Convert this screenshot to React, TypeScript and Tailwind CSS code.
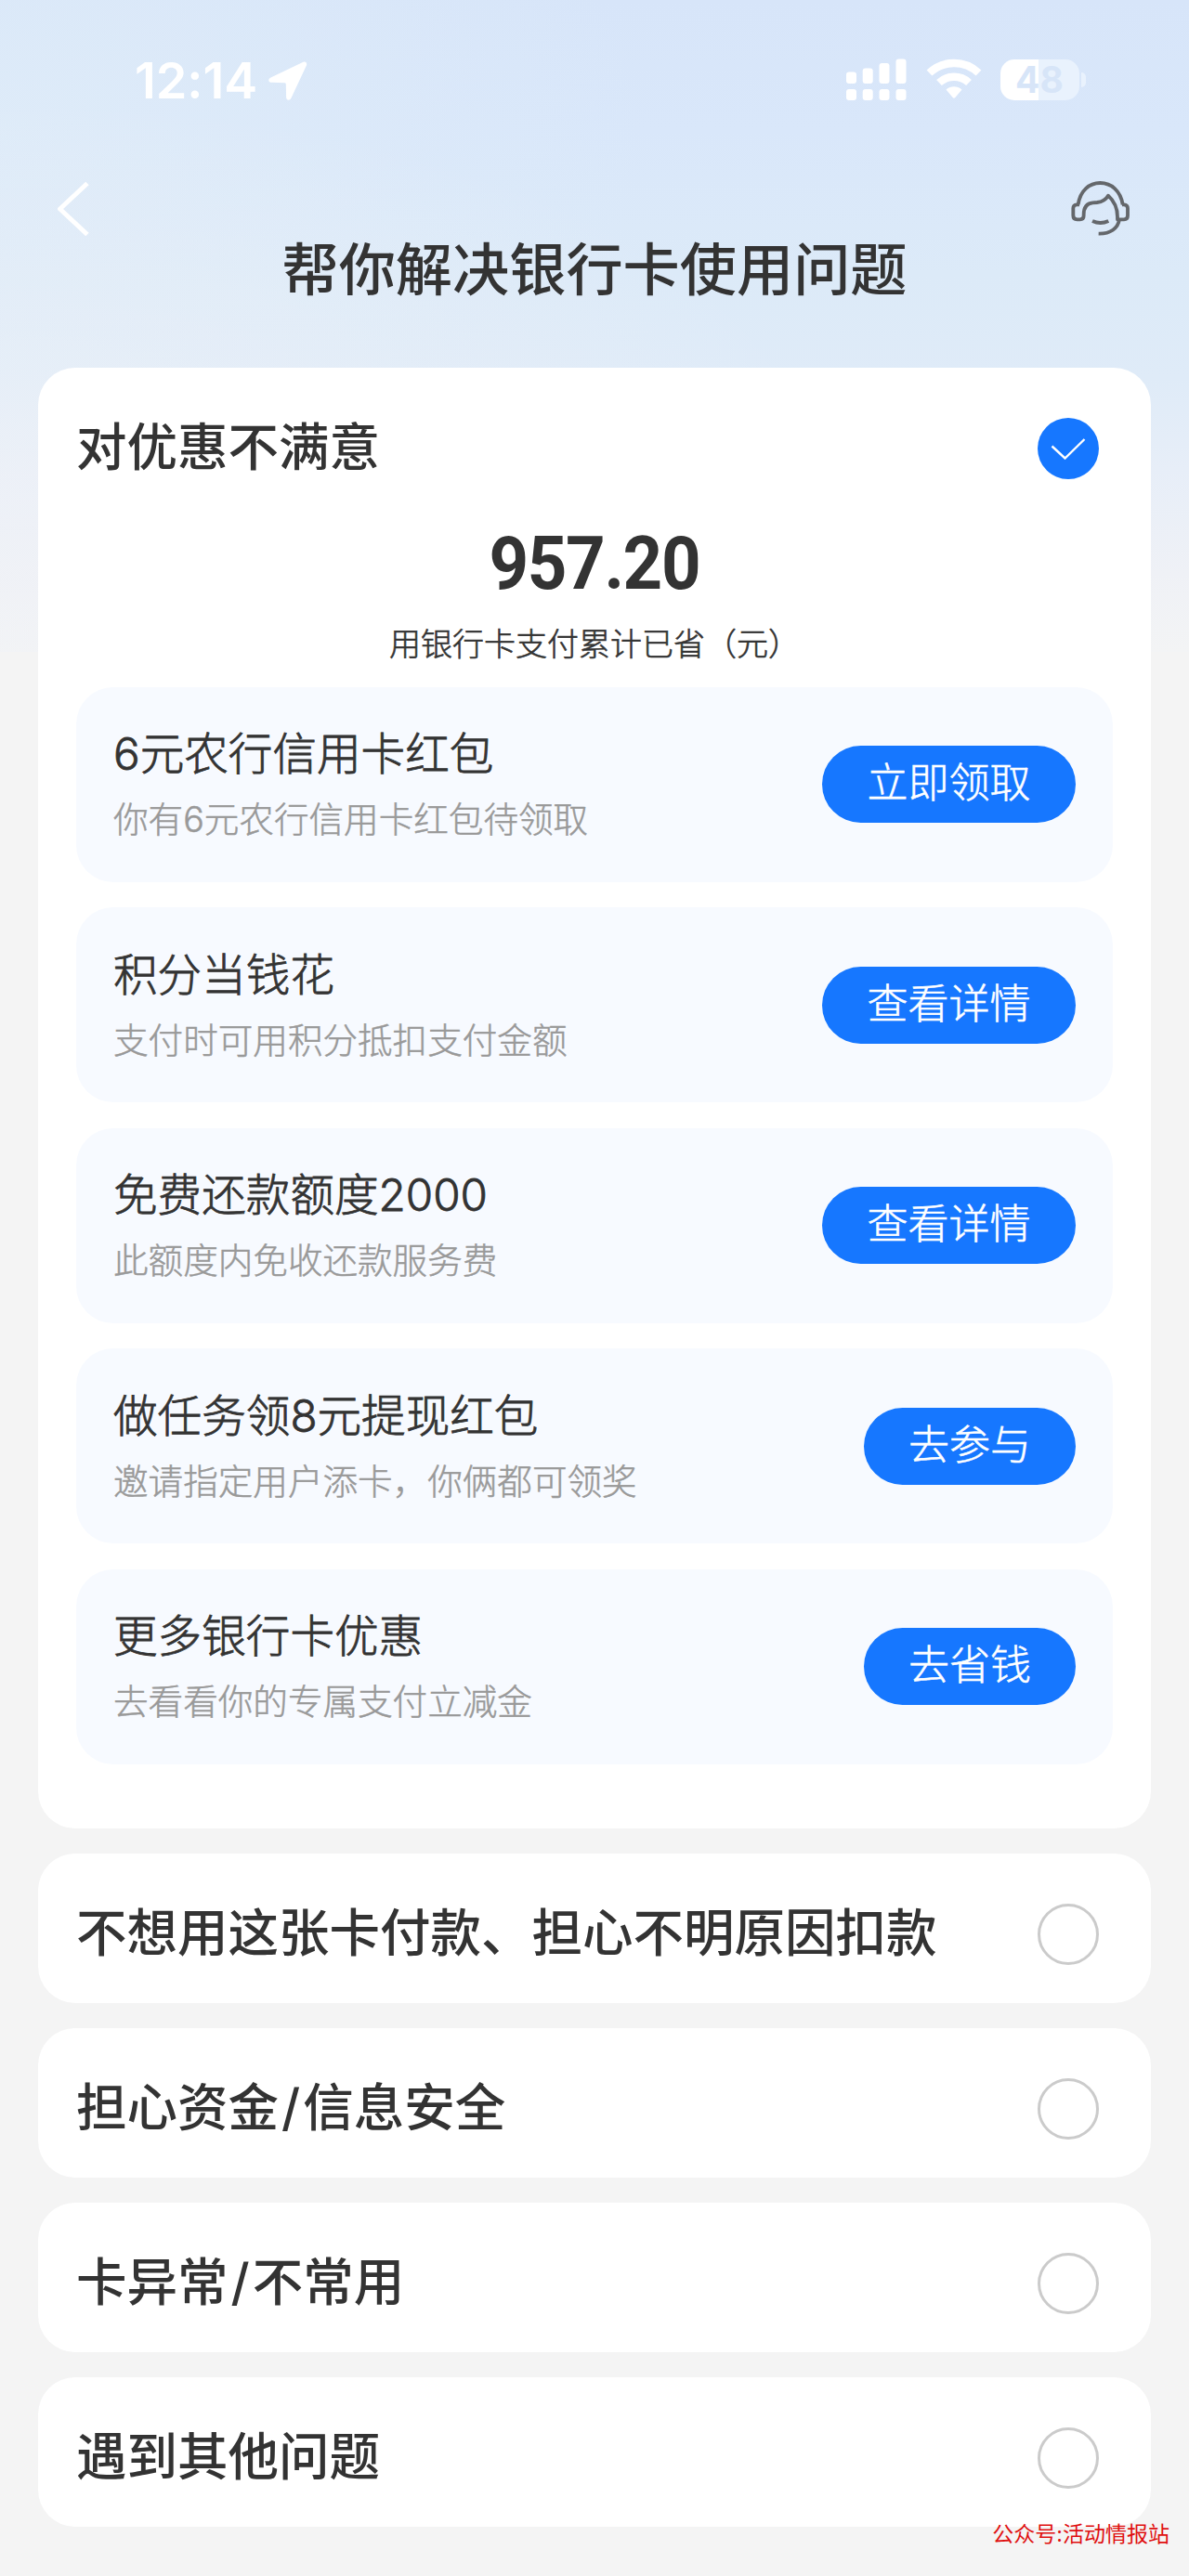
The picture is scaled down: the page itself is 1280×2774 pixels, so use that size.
import React from "react";

type Offer = { title: string; note: string; action: string; small?: boolean };

const offers: Offer[] = [
  { title: "6元农行信用卡红包", note: "你有6元农行信用卡红包待领取", action: "立即领取" },
  { title: "积分当钱花", note: "支付时可用积分抵扣支付金额", action: "查看详情" },
  { title: "免费还款额度2000", note: "此额度内免收还款服务费", action: "查看详情" },
  { title: "做任务领8元提现红包", note: "邀请指定用户添卡，你俩都可领奖", action: "去参与", small: true },
  { title: "更多银行卡优惠", note: "去看看你的专属支付立减金", action: "去省钱", small: true },
];

const reasons = ["不想用这张卡付款、担心不明原因扣款", "担心资金/信息安全", "卡异常/不常用", "遇到其他问题"];

function StatusBar() {
  return (
    <div className="flex h-[108px] items-end justify-between pl-[145px] pr-[111px] text-white">
      <div className="flex items-end gap-[13px]">
        <span className="mb-[2px] w-[131px] font-['Inter'] text-[54px] font-semibold leading-[39px] tracking-[-0.100px]">12:14</span>
        <svg className="h-[42px] w-[42px]" viewBox="0 0 42 42" fill="currentColor">
          <path d="M37.500.8 2.500 17.500C-.8 19.200-.3 22.600 3.300 22.800L17.500 23.300C18.400 23.400 18.800 23.800 18.800 24.700L19.100 38.500C19.200 42.400 23 42.800 24.500 39.500L40.900 4.600C42 2 40-.4 37.500.8Z" />
        </svg>
      </div>
      <div className="flex items-end">
        <svg className="h-[45px] w-[65px]" viewBox="0 0 65 45" fill="currentColor">
          <rect x="0" y="14.500" width="11" height="12.500" rx="3" />
          <rect x="17.700" y="10.500" width="11" height="16.500" rx="3" />
          <rect x="35.500" y="5" width="11" height="22" rx="3" />
          <rect x="53.500" y="0.500" width="11" height="26.500" rx="3" />
          <rect x="0" y="33" width="11" height="12" rx="3" />
          <rect x="17.700" y="33" width="11" height="12" rx="3" />
          <rect x="35.500" y="33" width="11" height="12" rx="3" />
          <rect x="53.500" y="33" width="11" height="12" rx="3" />
        </svg>
        <svg className="ml-[21px] h-[45px] w-[60px]" viewBox="0 0 60 45" fill="none" stroke="currentColor">
          <path d="M3.500 15.500C18.500 1.500 41.500 1.500 56.500 15.500" strokeWidth="8.500" />
          <path d="M14 26C23 17.700 37 17.700 46 26" strokeWidth="8.500" />
          <path d="M21.500 33.500C26.500 29.300 33.500 29.300 38.500 33.500L31.300 42Q30 43.500 28.700 42Z" fill="currentColor" stroke="none" />
        </svg>
        <div className="ml-[20px] flex h-[44px] w-[85px] items-center justify-center rounded-[15px] bg-[linear-gradient(90deg,#fff_0_48%,#e9f2fd_48%)] font-['Inter'] text-[39px] font-bold leading-[44px] text-[#d7e5f8]">
          48
        </div>
        <div className="mb-[14px] ml-[2.500px] h-[16px] w-[5px] rounded-r-[6px] bg-[#e9f2fd]" />
      </div>
    </div>
  );
}

function Headset() {
  return (
    <svg className="h-[65px] w-[70px]" viewBox="60 65 210 195" fill="none" stroke="#64676b" strokeWidth="11.500" strokeLinejoin="round">
      <path d="M92 150C98 105 128 80 163 80C199 80 229 105 236 150" />
      <path d="M96 150H88Q76 151 76 162V185Q76 198 89 198H98Q110 198 110 186V182C110 159 119 146 139 144L153 143C172 141 183 132 189 121C208 138 219 163 219 190V198H240Q252 198 252 186V162Q252 151 240 150H234" />
      <path d="M225 198C221 227 195 245 158 244" />
      <path d="M138 203Q164 215 190 203" />
    </svg>
  );
}

function Radio({ checked = false }: { checked?: boolean }) {
  return checked ? (
    <span className="flex size-[66px] items-center justify-center rounded-full bg-[#1677ff]">
      <svg className="h-[24px] w-[38px]" viewBox="0 0 38 24" fill="none" stroke="#fff" strokeWidth="2.400">
        <path d="M1.500 9.500 15.500 22.500 36.500 2" />
      </svg>
    </span>
  ) : (
    <span className="size-[66px] rounded-full border-[3px] border-[#cbcbcb]" />
  );
}

function Choice({ label, checked }: { label: string; checked?: boolean }) {
  const [head, tail] = label.split("/");
  return (
    <div className="flex h-[161px] items-center justify-between pl-[41px] pr-[56px] pt-[13px]">
      <span className="-mt-[4px] text-[54.500px] font-medium leading-[64px]">
        {head}
        {tail && <span className="px-[3px]">/</span>}
        {tail}
      </span>
      <Radio checked={checked} />
    </div>
  );
}

export default function App() {
  return (
    <div className="relative h-[2774px] w-[1280px] overflow-hidden bg-[#f4f4f4] font-['Inter','Noto_Sans_CJK_SC',sans-serif] text-[#333]">
      <div className="absolute inset-x-0 top-0 h-[702px] bg-[radial-gradient(900px_420px_at_0%_75%,#f0f2f799,#f0f2f700),radial-gradient(700px_400px_at_0%_20%,#dfecf8cc,#dfecf800),linear-gradient(180deg,#d7e5f9_0,#d9e7fa_20%,#dceaf8_42%,#dfebf8_58%,#e7eef8_72%,#eff1f6_88%,#f3f4f5_100%)]" />
      <div className="relative">
        <StatusBar />
        <header className="flex h-[288px] flex-col">
          <div className="flex items-start justify-between pl-[60px] pr-[60px] pt-[84px]">
            <svg className="mt-[4px] h-[58px] w-[36px]" viewBox="0 0 36 58" fill="none" stroke="#fff" strokeWidth="5" strokeLinejoin="round">
              <path d="M34 1.500 4.500 29 34 56.500" />
            </svg>
            <Headset />
          </div>
          <h1 className="-mt-[8px] text-center text-[61.200px] font-medium leading-[84px]">帮你解决银行卡使用问题</h1>
        </header>

        <main className="flex flex-col gap-[27px] px-[41px]">
          <section className="h-[1573px] rounded-[40px] bg-white">
            <Choice label="对优惠不满意" checked />
            <div className="flex h-[182.500px] flex-col items-center">
              <div className="mt-[10px] scale-x-[0.93] font-['Roboto'] text-[80px] font-bold leading-[80px] tracking-[-1.500px]">957.20</div>
              <div className="mt-[22px] text-[34px] font-light leading-[50px] [-webkit-text-stroke:0.600px]">用银行卡支付累计已省（元）</div>
            </div>
            <div className="flex flex-col gap-[27.500px] px-[41px]">
              {offers.map((o) => (
                <div key={o.title} className="flex h-[210px] items-center justify-between rounded-[40px] bg-[#f7faff] px-[40px]">
                  <div className="mt-[3px] flex flex-col gap-[10px] font-light">
                    <span className="text-[47.600px] leading-[64px] [-webkit-text-stroke:0.800px]">{o.title}</span>
                    <span className="text-[37.600px] leading-[58px] text-[#999] [-webkit-text-stroke:0.500px]">{o.note}</span>
                  </div>
                  <button
                    className={
                      "h-[83px] rounded-full bg-[#1677ff] pb-[3px] text-[44px] font-light leading-[80px] text-white [-webkit-text-stroke:0.600px] " +
                      (o.small ? "w-[228px]" : "w-[273px]")
                    }
                  >
                    {o.action}
                  </button>
                </div>
              ))}
            </div>
          </section>
          {reasons.map((r) => (
            <section key={r} className="rounded-[40px] bg-white">
              <Choice label={r} />
            </section>
          ))}
        </main>
      </div>
      <div className="absolute bottom-[28px] right-[21px] text-[23px] leading-[34px] text-[#e01010]">公众号:活动情报站</div>
    </div>
  );
}
